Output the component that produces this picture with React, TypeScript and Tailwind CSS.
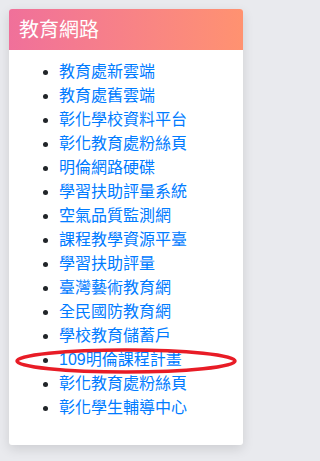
const links = [
  "教育處新雲端",
  "教育處舊雲端",
  "彰化學校資料平台",
  "彰化教育處粉絲頁",
  "明倫網路硬碟",
  "學習扶助評量系統",
  "空氣品質監測網",
  "課程教學資源平臺",
  "學習扶助評量",
  "臺灣藝術教育網",
  "全民國防教育網",
  "學校教育儲蓄戶",
  "109明倫課程計畫",
  "彰化教育處粉絲頁",
  "彰化學生輔導中心",
];

export default function App() {
  return (
    <div
      className="min-h-screen w-full bg-[#e9eaee] pt-[9px] pl-[9px]"
      style={{ fontFamily: '"Liberation Sans", "Noto Sans CJK TC", sans-serif' }}
    >
      <div className="relative w-[234px] h-[436px] bg-white rounded-[3px] shadow-[0_4px_12px_rgba(0,0,0,0.12)] overflow-hidden">
        {/* 標題 */}
        <div className="h-[41px] bg-gradient-to-r from-[#f0709a] to-[#ff9270] px-[10px] flex items-center">
          <h2 className="text-white text-[20px] leading-none">教育網路</h2>
        </div>

        {/* 連結 */}
        <ul className="list-disc pl-[50px] pt-[10px] text-[16px] leading-[24px] text-[#212529] marker:text-[#212529]">
          {links.map((name, i) => (
            <li key={i}>
              <a href="#" className="text-[#007bff]">
                {name}
              </a>
            </li>
          ))}
        </ul>

        {/* 紅圈 */}
        <svg
          className="absolute left-[6px] top-[338px] pointer-events-none"
          width="224"
          height="28"
          viewBox="0 0 224 28"
        >
          <ellipse cx="111" cy="14" rx="109" ry="11" fill="none" stroke="#e81c26" strokeWidth="3.5" />
        </svg>
      </div>
    </div>
  );
}
